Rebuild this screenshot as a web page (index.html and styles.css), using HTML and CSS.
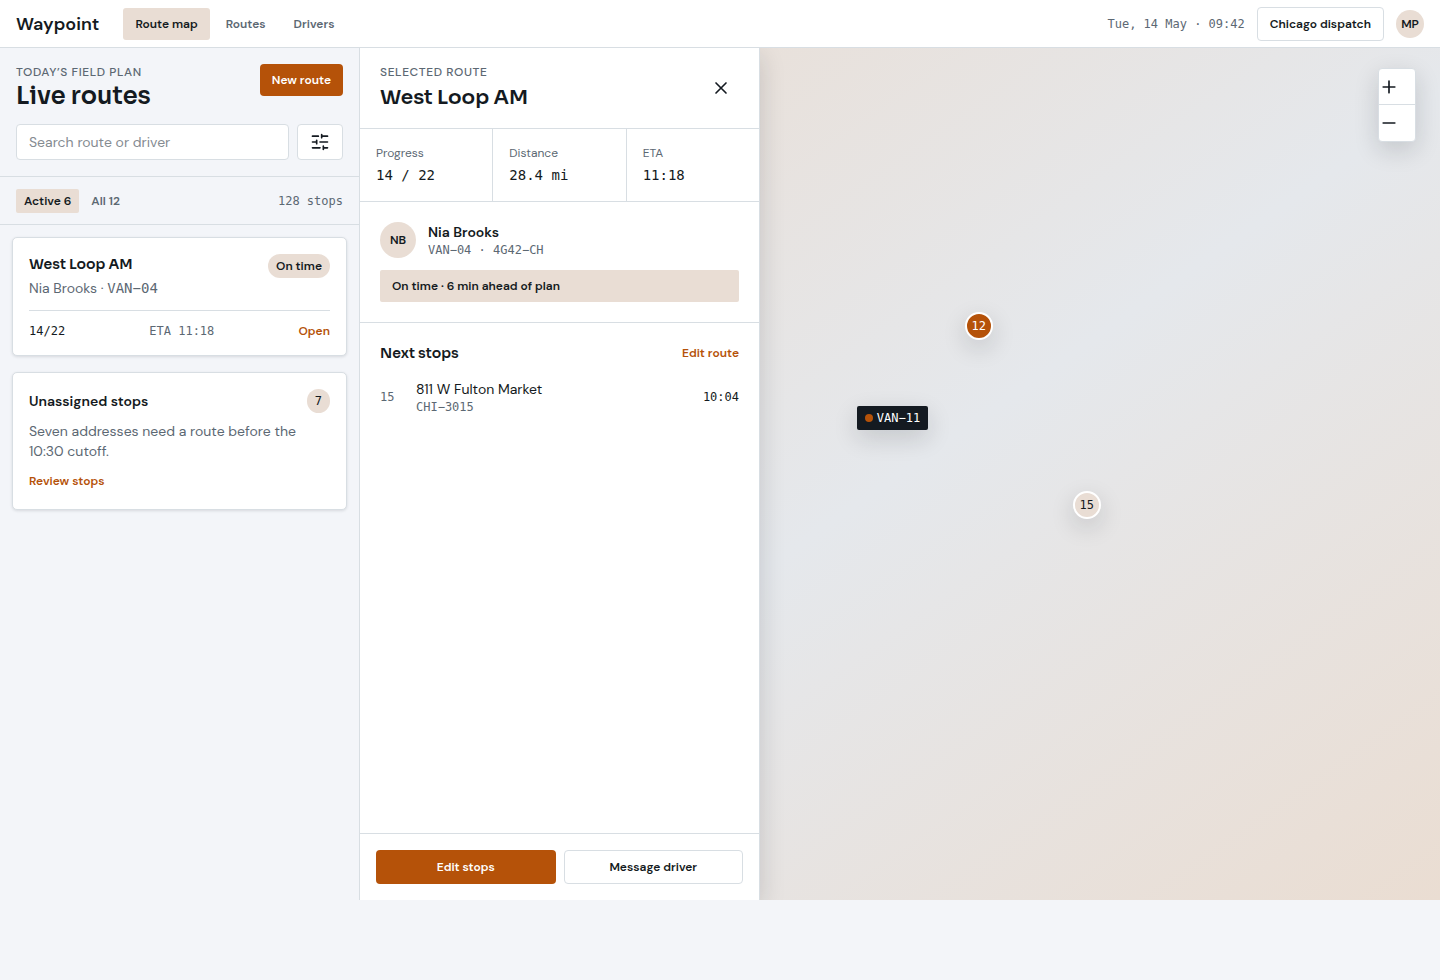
FILE: index.html
```html
<!DOCTYPE html>
<html lang="en">
<head>
    <meta charset="UTF-8">
    <meta name="viewport" content="width=device-width, initial-scale=1.0">
    <title>Waypoint</title>
    <link rel="stylesheet" href="styles.css">
</head>
<body>
    <header class="topbar">
        <div class="brand">Waypoint</div>
        <nav class="nav">
            <a href="#" class="nav-link active">Route map</a>
            <a href="#" class="nav-link">Routes</a>
            <a href="#" class="nav-link">Drivers</a>
        </nav>
        <div class="topbar-right">
            <time class="mono muted">Tue, 14 May · 09:42</time>
            <button class="btn">Chicago dispatch</button>
            <span class="avatar avatar-small">MP</span>
        </div>
    </header>

    <main class="workspace">
        <!-- Route list -->
        <aside class="sidebar">
            <div class="sidebar-head">
                <div class="title-row">
                    <div>
                        <p class="eyebrow">Today’s field plan</p>
                        <h1>Live routes</h1>
                    </div>
                    <button class="btn btn-primary">New route</button>
                </div>
                <div class="search-row">
                    <input type="search" class="search" placeholder="Search route or driver" aria-label="Search route or driver">
                    <button class="btn btn-icon" aria-label="Filters">
                        <svg class="icon" viewBox="0 0 24 24">
                            <path d="M10 5H3M12 19H3M14 3v4M16 17v4M21 12h-9M21 19h-5M21 5h-7M8 10v4M8 12H3"/>
                        </svg>
                    </button>
                </div>
            </div>

            <div class="filters">
                <button class="filter active">Active 6</button>
                <button class="filter">All 12</button>
                <span class="mono muted stop-count">128 stops</span>
            </div>

            <div class="cards">
                <article class="card">
                    <div class="card-head">
                        <div>
                            <h2>West Loop AM</h2>
                            <p class="card-driver">Nia Brooks · <span class="van">VAN−04</span></p>
                        </div>
                        <span class="badge">On time</span>
                    </div>
                    <div class="card-foot">
                        <span class="mono">14/22</span>
                        <span class="mono muted">ETA 11:18</span>
                        <a href="#" class="link">Open</a>
                    </div>
                </article>

                <article class="card">
                    <div class="card-head centered">
                        <h3>Unassigned stops</h3>
                        <span class="badge badge-count">7</span>
                    </div>
                    <p class="card-text">Seven addresses need a route before the 10:30 cutoff.</p>
                    <a href="#" class="link card-link">Review stops</a>
                </article>
            </div>
        </aside>

        <!-- Map -->
        <section class="map" aria-label="Route map">
            <button class="pin pin-current mono">12</button>
            <button class="pin pin-next mono">15</button>
            <div class="vehicle mono">VAN−11</div>
            <div class="zoom">
                <button aria-label="Zoom in">
                    <svg class="icon" viewBox="0 0 24 24">
                        <path d="M5 12h14M12 5v14"/>
                    </svg>
                </button>
                <button aria-label="Zoom out">
                    <svg class="icon" viewBox="0 0 24 24">
                        <path d="M5 12h14"/>
                    </svg>
                </button>
            </div>
        </section>

        <!-- Selected route -->
        <section class="drawer">
            <div class="drawer-head">
                <div>
                    <p class="eyebrow">Selected route</p>
                    <h2 class="drawer-title">West Loop AM</h2>
                </div>
                <button class="close" aria-label="Close">
                    <svg class="icon" viewBox="0 0 24 24">
                        <path d="M18 6L6 18M6 6l12 12"/>
                    </svg>
                </button>
            </div>

            <dl class="stats">
                <div class="stat"><dt>Progress</dt><dd>14 / 22</dd></div>
                <div class="stat"><dt>Distance</dt><dd>28.4 mi</dd></div>
                <div class="stat"><dt>ETA</dt><dd>11:18</dd></div>
            </dl>

            <div class="driver">
                <div class="driver-row">
                    <span class="avatar">NB</span>
                    <div>
                        <h3>Nia Brooks</h3>
                        <p class="mono muted">VAN−04 · 4G42−CH</p>
                    </div>
                </div>
                <p class="notice">On time · 6 min ahead of plan</p>
            </div>

            <div class="stops">
                <div class="stops-head">
                    <h2>Next stops</h2>
                    <a href="#" class="link">Edit route</a>
                </div>
                <div class="stop">
                    <span class="mono muted">15</span>
                    <div>
                        <p>811 W Fulton Market</p>
                        <p class="mono muted">CHI−3015</p>
                    </div>
                    <time class="mono">10:04</time>
                </div>
            </div>

            <div class="drawer-foot">
                <button class="btn btn-primary">Edit stops</button>
                <button class="btn">Message driver</button>
            </div>
        </section>
    </main>
</body>
</html>
```
FILE: styles.css
```css
:root {
    --ink: #141a21;
    --muted: #5c6873;
    --line: #d8dee3;
    --bg: #f3f5f9;
    --accent: #b55209;
    --sand: #e9ddd4;
    --sans: "DM Sans", Inter, sans-serif;
    --display: Sora, Inter, sans-serif;
    --mono: "DejaVu Sans Mono", monospace;
    --shadow: 0 8px 24px rgba(20, 26, 33, 0.16);
}
* {
    box-sizing: border-box;
}
body {
    margin: 0;
    min-height: 100vh;
    padding-bottom: 80px;
    display: flex;
    flex-direction: column;
    background: var(--bg);
    color: var(--ink);
    font-family: var(--sans);
    font-size: 14px;
    line-height: 20px;
}
h1, h2, h3, p, dl, dd {
    margin: 0;
}
button, input {
    font: inherit;
    color: inherit;
}
button {
    cursor: pointer;
}
a {
    text-decoration: none;
}
.icon {
    display: block;
    width: 20px;
    height: 20px;
    fill: none;
    stroke: currentColor;
    stroke-width: 2;
    stroke-linecap: round;
    stroke-linejoin: round;
}
h1, h2 {
    font-family: var(--display);
    font-weight: 600;
}
h1 {
    font-size: 24px;
    line-height: 32px;
}
h2 {
    font-size: 14px;
    line-height: 20px;
}
h3 {
    font-size: 14px;
    font-weight: 600;
    line-height: 20px;
}
.mono {
    font-family: var(--mono);
    font-size: 12px;
    line-height: 16px;
}
.muted {
    color: var(--muted);
}
.eyebrow {
    color: var(--muted);
    font-size: 12px;
    font-weight: 500;
    letter-spacing: 0.05em;
    line-height: 16px;
    text-transform: uppercase;
}
.link {
    color: var(--accent);
    font-size: 12px;
    font-weight: 600;
    line-height: 16px;
}

/* Buttons */
.btn {
    padding: 8px 12px;
    background: #fff;
    border: 1px solid var(--line);
    border-radius: 4px;
    font-size: 12px;
    font-weight: 600;
    line-height: 16px;
}
.btn-primary {
    background: var(--accent);
    border: 0;
    color: #fff;
}

/* Top bar */
.topbar {
    display: flex;
    align-items: center;
    height: 48px;
    padding: 0 16px;
    background: #fff;
    border-bottom: 1px solid var(--line);
}
.brand {
    font-size: 18px;
    font-weight: 600;
    line-height: 24px;
}
.nav {
    display: flex;
    gap: 4px;
    margin-left: 24px;
}
.nav-link {
    padding: 8px 12px;
    border-radius: 3px;
    color: var(--muted);
    font-size: 12px;
    font-weight: 600;
    line-height: 16px;
}
.nav-link.active {
    background: var(--sand);
    color: var(--ink);
}
.topbar-right {
    display: flex;
    align-items: center;
    gap: 12px;
    margin-left: auto;
}
.avatar {
    display: grid;
    place-items: center;
    width: 36px;
    height: 36px;
    border-radius: 50%;
    background: var(--sand);
    font-size: 12px;
    font-weight: 600;
}
.avatar-small {
    width: 28px;
    height: 28px;
}

/* The map fills the last two columns, the drawer lies over the first of them */
.workspace {
    flex: 1;
    display: grid;
    grid-template-columns: 360px 400px 1fr;
}

/* Sidebar */
.sidebar {
    grid-area: 1 / 1;
    border-right: 1px solid var(--line);
}
.sidebar-head {
    padding: 16px;
    border-bottom: 1px solid var(--line);
}
.title-row {
    display: flex;
    align-items: flex-start;
    justify-content: space-between;
}
.search-row {
    display: flex;
    gap: 8px;
    margin-top: 12px;
}
.search {
    flex: 1;
    min-width: 0;
    height: 36px;
    padding: 0 12px;
    background: #fff;
    border: 1px solid var(--line);
    border-radius: 4px;
    appearance: none;
}
.search::placeholder {
    color: #858b91;
}
.btn-icon {
    display: grid;
    place-items: center;
    width: 46px;
    height: 36px;
    padding: 0;
}
.filters {
    display: flex;
    align-items: center;
    gap: 4px;
    height: 48px;
    padding: 0 16px;
    border-bottom: 1px solid var(--line);
}
.filter {
    padding: 4px 8px;
    background: none;
    border: 0;
    border-radius: 2px;
    color: var(--muted);
    font-size: 12px;
    font-weight: 600;
    line-height: 16px;
}
.filter.active {
    background: var(--sand);
    color: var(--ink);
}
.stop-count {
    margin-left: auto;
}
.cards {
    display: grid;
    gap: 16px;
    padding: 12px;
}
.card {
    padding: 16px;
    background: #fff;
    border: 1px solid var(--line);
    border-radius: 5px;
    box-shadow: 0 1px 3px rgba(20, 26, 33, 0.12);
}
.card-head {
    display: flex;
    align-items: flex-start;
    justify-content: space-between;
}
.card-head.centered {
    align-items: center;
}
.card-driver {
    margin-top: 4px;
    color: var(--muted);
}
.van {
    font-family: var(--mono);
}
.badge {
    padding: 4px 8px;
    border-radius: 12px;
    background: var(--sand);
    font-size: 12px;
    font-weight: 600;
    line-height: 16px;
}
.badge-count {
    font-family: var(--mono);
    font-weight: 400;
}
.card-foot {
    display: flex;
    align-items: center;
    justify-content: space-between;
    margin-top: 12px;
    padding-top: 12px;
    border-top: 1px solid var(--line);
}
.card-text {
    margin: 8px 0;
    color: var(--muted);
}
.card-link {
    display: block;
    width: fit-content;
    padding: 4px 0;
}

/* Drawer */
.drawer {
    grid-area: 1 / 2;
    z-index: 1;
    display: flex;
    flex-direction: column;
    background: #fff;
    border-right: 1px solid var(--line);
    box-shadow: var(--shadow);
    clip-path: inset(0 -40px 0 0);
}
.drawer-head {
    display: flex;
    align-items: center;
    justify-content: space-between;
    padding: 16px 20px;
    border-bottom: 1px solid var(--line);
}
.drawer-title {
    margin-top: 4px;
    font-size: 20px;
    line-height: 28px;
}
.close {
    display: grid;
    place-items: center;
    width: 36px;
    height: 36px;
    padding: 0;
    background: none;
    border: 0;
}
.stats {
    display: grid;
    grid-template-columns: repeat(3, 1fr);
    gap: 1px;
    background: var(--line);
    border-bottom: 1px solid var(--line);
}
.stat {
    padding: 16px;
    background: #fff;
}
.stat dt {
    color: var(--muted);
    font-size: 12px;
    line-height: 16px;
}
.stat dd {
    margin-top: 4px;
    font-family: var(--mono);
}
.driver {
    padding: 20px;
    border-bottom: 1px solid var(--line);
}
.driver-row {
    display: flex;
    align-items: center;
    gap: 12px;
}
.notice {
    margin-top: 12px;
    padding: 8px 12px;
    border-radius: 2px;
    background: var(--sand);
    font-size: 12px;
    font-weight: 600;
    line-height: 16px;
}
.stops {
    flex: 1;
    padding: 20px;
}
.stops-head {
    display: flex;
    align-items: center;
    justify-content: space-between;
}
.stop {
    display: grid;
    grid-template-columns: 24px 1fr auto;
    align-items: center;
    gap: 12px;
    margin-top: 16px;
}
.drawer-foot {
    display: grid;
    grid-template-columns: 1fr 1fr;
    gap: 8px;
    padding: 16px;
    border-top: 1px solid var(--line);
}

/* Map */
.map {
    grid-area: 1 / 2 / 2 / 4;
    position: relative;
    background: linear-gradient(145deg, #eaddd2 0%, #e5e8ec 50%, #eaddd2 100%);
}
.pin {
    position: absolute;
    width: 28px;
    height: 28px;
    padding: 0;
    border: 2px solid #fff;
    border-radius: 50%;
    box-shadow: var(--shadow);
}
.pin-current {
    left: 56%;
    top: 31%;
    background: var(--accent);
    color: #fff;
}
.pin-next {
    left: 66%;
    top: 52%;
    background: var(--sand);
}
.vehicle {
    position: absolute;
    left: 46%;
    top: 42%;
    display: flex;
    align-items: center;
    gap: 4px;
    padding: 4px 8px;
    border-radius: 2px;
    background: var(--ink);
    color: #fff;
    box-shadow: var(--shadow);
}
.vehicle::before {
    content: "";
    width: 8px;
    height: 8px;
    border-radius: 50%;
    background: var(--accent);
}
.zoom {
    position: absolute;
    top: 20px;
    right: 24px;
    width: 38px;
    background: #fff;
    border: 1px solid var(--line);
    border-radius: 4px;
    box-shadow: var(--shadow);
}
.zoom button {
    display: flex;
    align-items: center;
    width: 100%;
    height: 36px;
    padding: 0;
    background: none;
    border: 0;
}
.zoom button:first-child {
    border-bottom: 1px solid var(--line);
}
```
